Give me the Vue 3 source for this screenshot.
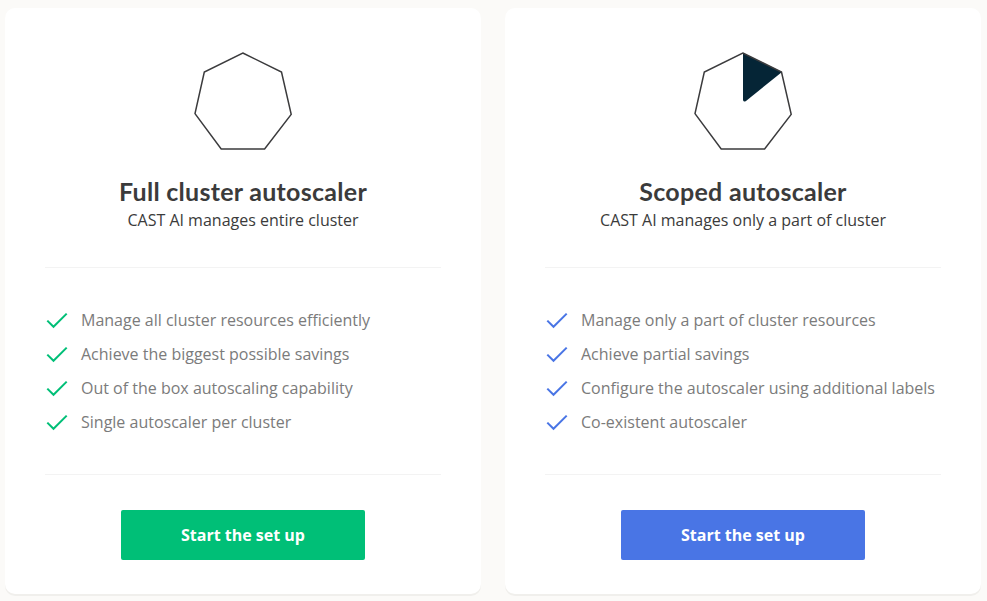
<script setup>
const plans = [
  {
    id: 'full',
    title: 'Full cluster autoscaler',
    subtitle: 'CAST AI manages entire cluster',
    features: [
      'Manage all cluster resources efficiently',
      'Achieve the biggest possible savings',
      'Out of the box autoscaling capability',
      'Single autoscaler per cluster',
    ],
  },
  {
    id: 'scoped',
    title: 'Scoped autoscaler',
    subtitle: 'CAST AI manages only a part of cluster',
    features: [
      'Manage only a part of cluster resources',
      'Achieve partial savings',
      'Configure the autoscaler using additional labels',
      'Co-existent autoscaler',
    ],
  },
]
</script>

<template>
  <main class="plans">
    <section v-for="plan in plans" :key="plan.id" class="card" :class="plan.id">
      <svg class="shape" width="100" height="100" viewBox="0 0 100 100" aria-hidden="true">
        <path v-if="plan.id === 'scoped'" class="slice" d="M50 2 L89 21 L53 50 Q50 51.5 50 48.5 Z" />
        <path class="outline" d="M49.8 2 L88.5 21 L98.2 63.4 L71.6 98 H28.2 L2 62.6 L11.3 21 Z" />
      </svg>
      <h2 class="title">{{ plan.title }}</h2>
      <p class="subtitle">{{ plan.subtitle }}</p>
      <ul class="features">
        <li v-for="feature in plan.features" :key="feature">
          <svg class="check" width="24" height="24" viewBox="0 0 24 24" aria-hidden="true">
            <path d="M2.3 12.6 L8.5 18.8 L21.7 5.6" />
          </svg>
          <span>{{ feature }}</span>
        </li>
      </ul>
      <button class="action" type="button">Start the set up</button>
    </section>
  </main>
</template>

<style>
body {
  background: #fbfaf8;
}
</style>

<style scoped>
.plans {
  box-sizing: border-box;
  display: grid;
  grid-template-columns: 476px 476px;
  gap: 24px;
  height: 601px;
  padding: 8px 6px 7px 5px;
  font-family: "Open Sans", sans-serif;
}
.card {
  --accent: #00bf77;
  box-sizing: border-box;
  display: flex;
  flex-direction: column;
  align-items: center;
  height: 586px;
  padding: 43px 40px 0;
  border-radius: 10px;
  background: #fff;
  box-shadow: 0 2px 0 #f0efec;
}
.scoped {
  --accent: #4975e5;
}
.shape {
  flex: none;
  display: block;
}
.outline {
  fill: none;
  stroke: #3b3b3d;
  stroke-width: 1.5;
}
.slice {
  fill: #052536;
}
.title {
  margin: 24px 0 0;
  font-family: Lato, sans-serif;
  font-size: 25px;
  font-weight: 700;
  line-height: 32px;
  letter-spacing: 0.28px;
  color: #3b3b3b;
  white-space: nowrap;
}
.subtitle {
  margin: 1px 0 0;
  font-size: 16px;
  line-height: 24px;
  color: #3b3b3b;
}
.features {
  box-sizing: border-box;
  width: 396px;
  height: 208px;
  margin: 35px 0 0;
  padding: 40px 0 0;
  border: 1px solid #f3f3f3;
  border-width: 1px 0;
  list-style: none;
}
.features li {
  display: flex;
  align-items: center;
  gap: 12px;
  height: 24px;
  margin-bottom: 10px;
  font-size: 16px;
  line-height: 24px;
  color: #7b7b7b;
  white-space: nowrap;
}
.check path {
  fill: none;
  stroke: var(--accent);
  stroke-width: 2;
}
.action {
  width: 244px;
  height: 50px;
  margin-top: 35px;
  padding: 0;
  border: 0;
  border-radius: 2px;
  background: var(--accent);
  color: #fff;
  font-family: inherit;
  font-size: 16px;
  font-weight: 700;
  line-height: 24px;
}
</style>
